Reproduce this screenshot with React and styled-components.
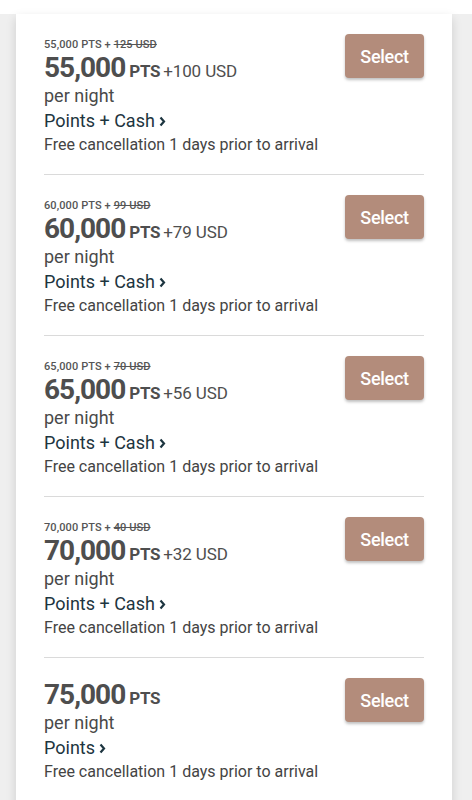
import React from 'react';
import styled, { createGlobalStyle } from 'styled-components';

const GlobalStyle = createGlobalStyle`
  html, body {
    margin: 0;
    padding: 0;
    background: #fff;
    font-family: Roboto, "Liberation Sans", sans-serif;
  }
`;

const Page = styled.div`
  padding-top: 14px;
  background: #fff;
`;

const Backdrop = styled.div`
  background: #efefef;
  padding: 0 20px 3px 16px;
`;

const Card = styled.div`
  background: #fff;
  padding: 0 28px;
  box-shadow: 0 4px 10px rgba(0, 0, 0, 0.14);
`;

const Row = styled.div`
  display: flex;
  justify-content: space-between;
  align-items: flex-start;
  height: 140px;
  padding-top: 20px;
  border-bottom: ${p => (p.last ? 'none' : '1px solid #dadada')};
`;

const Info = styled.div`
  display: flex;
  flex-direction: column;
  padding-top: ${p => (p.noOld ? '1px' : '0')};
`;

const OldPrice = styled.div`
  margin-top: 4px;
  font-size: 11px;
  line-height: 14px;
  font-weight: 500;
  color: #555;
  letter-spacing: 0.1px;

  s {
    text-decoration: line-through;
  }
`;

const PriceLine = styled.div`
  display: flex;
  align-items: baseline;
  line-height: 31px;
  color: #4e4e4e;
`;

const Big = styled.span`
  font-size: 28px;
  font-weight: 700;
  letter-spacing: -1px;
`;

const Pts = styled.span`
  font-size: 17px;
  font-weight: 700;
  margin-left: 4px;
  letter-spacing: -0.3px;
`;

const Cash = styled.span`
  font-size: 17px;
  margin-left: 3px;
  letter-spacing: -0.1px;
`;

const Night = styled.div`
  margin-top: -2px;
  font-size: 18px;
  line-height: 22px;
  color: #4a4a4a;
`;

const Rate = styled.div`
  display: flex;
  align-items: center;
  gap: 4px;
  margin-top: 2px;
  font-size: 18px;
  line-height: 24px;
  color: #1d3540;
`;

const Policy = styled.div`
  margin-top: 1px;
  font-size: 16px;
  line-height: 22px;
  color: #444;
`;

const SelectButton = styled.button`
  width: 79px;
  height: 44px;
  border: none;
  border-radius: 4px;
  background: #b38c7b;
  color: #fff;
  font-family: Roboto, "Liberation Sans", sans-serif;
  font-size: 18px;
  font-weight: 500;
  letter-spacing: -0.3px;
  box-shadow: 0 2px 3px rgba(0, 0, 0, 0.25);
  cursor: pointer;
`;

const Chevron = () => (
  <svg width="7" height="11" viewBox="0 0 7 11">
    <path d="M1.5 1.5 L5 5.5 L1.5 9.5" fill="none" stroke="#1d3540" strokeWidth="2.2" />
  </svg>
);

const rates = [
  { pts: '55,000', old: '125 USD', cash: '100 USD' },
  { pts: '60,000', old: '99 USD', cash: '79 USD' },
  { pts: '65,000', old: '70 USD', cash: '56 USD' },
  { pts: '70,000', old: '40 USD', cash: '32 USD' },
  { pts: '75,000' },
];

const App = () => (
  <>
    <GlobalStyle />
    <Page>
      <Backdrop>
        <Card>
          {rates.map((r, i) => (
            <Row key={r.pts} last={i === rates.length - 1}>
              <Info noOld={!r.old}>
                {r.old && (
                  <OldPrice>
                    {r.pts} PTS + <s>{r.old}</s>
                  </OldPrice>
                )}
                <PriceLine>
                  <Big>{r.pts}</Big>
                  <Pts>PTS</Pts>
                  {r.cash && <Cash>+{r.cash}</Cash>}
                </PriceLine>
                <Night>per night</Night>
                <Rate>
                  {r.cash ? 'Points + Cash' : 'Points'}
                  <Chevron />
                </Rate>
                <Policy>Free cancellation 1 days prior to arrival</Policy>
              </Info>
              <SelectButton>Select</SelectButton>
            </Row>
          ))}
        </Card>
      </Backdrop>
    </Page>
  </>
);

export default App;
